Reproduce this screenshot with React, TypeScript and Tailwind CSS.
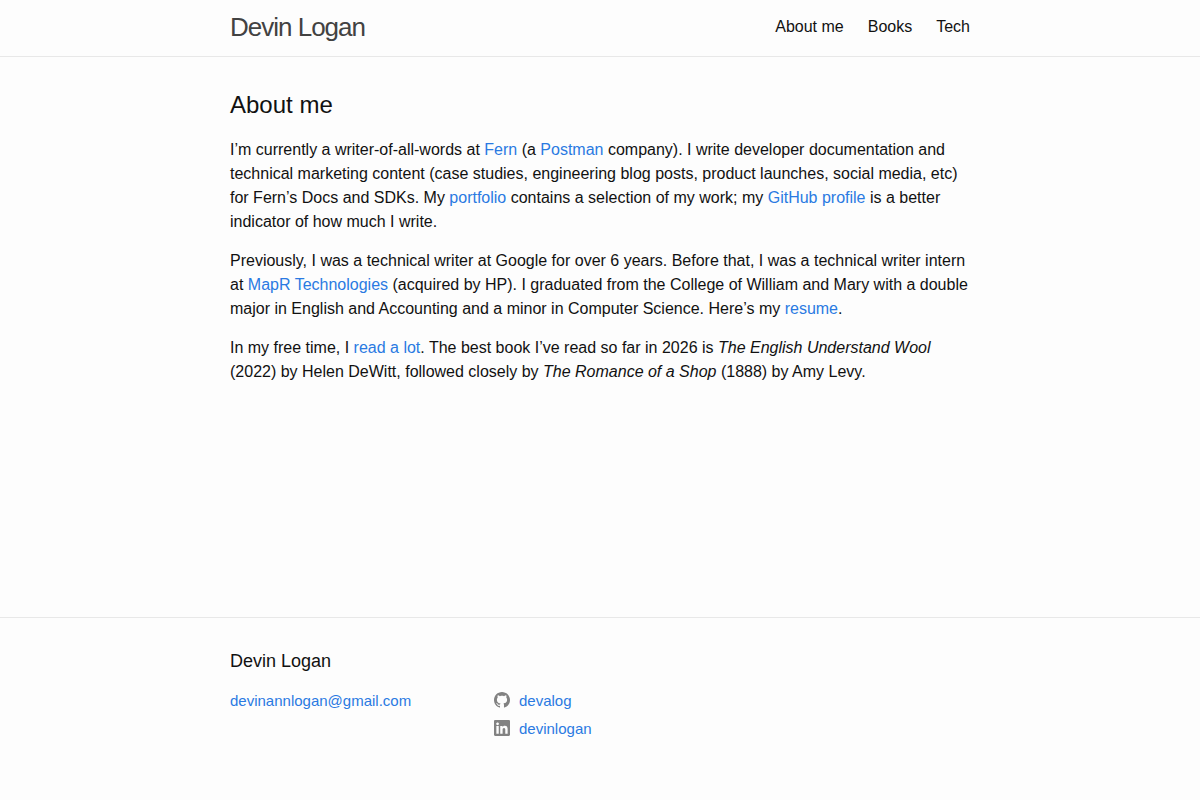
import type { ReactNode } from 'react';

const navigation = [
  { label: 'About me', href: '#about' },
  { label: 'Books', href: '#books' },
  { label: 'Tech', href: '#tech' },
];

function Wrapper({ children, className = '' }: { children: ReactNode; className?: string }) {
  return <div className={`mx-auto w-full max-w-[800px] px-[30px] ${className}`}>{children}</div>;
}

function TextLink({ href, children }: { href: string; children: ReactNode }) {
  return (
    <a href={href} className="text-[#2a7ae2] hover:text-[#111] hover:underline">
      {children}
    </a>
  );
}

function GitHubIcon() {
  return (
    <svg viewBox="0 0 16 16" className="mb-0.5 size-4 fill-[#828282]" aria-hidden="true">
      <path
        fillRule="evenodd"
        clipRule="evenodd"
        d="M8 0C3.58 0 0 3.582 0 8c0 3.535 2.292 6.533 5.47 7.59.4.075.547-.172.547-.385 0-.19-.007-.693-.01-1.36-2.226.483-2.695-1.073-2.695-1.073-.364-.924-.89-1.17-.89-1.17-.725-.496.056-.486.056-.486.803.056 1.225.824 1.225.824.714 1.223 1.873.87 2.33.665.072-.517.278-.87.507-1.07-1.777-.2-3.644-.888-3.644-3.953 0-.873.31-1.587.823-2.147-.083-.202-.358-1.015.077-2.117 0 0 .672-.215 2.2.82.638-.178 1.323-.266 2.003-.27.68.004 1.364.092 2.003.27 1.527-1.035 2.198-.82 2.198-.82.437 1.102.163 1.915.08 2.117.513.56.823 1.274.823 2.147 0 3.073-1.87 3.75-3.653 3.947.287.246.543.735.543 1.48 0 1.07-.01 1.933-.01 2.195 0 .215.144.463.55.385C13.71 14.53 16 11.534 16 8c0-4.418-3.582-8-8-8"
      />
    </svg>
  );
}

function LinkedInIcon() {
  return (
    <svg viewBox="0 0 16 16" className="mb-0.5 size-4 fill-[#828282]" aria-hidden="true">
      <path
        fillRule="evenodd"
        clipRule="evenodd"
        d="M13.632 13.635h-2.37V9.922c0-.886-.018-2.025-1.234-2.025-1.235 0-1.424.964-1.424 1.96v3.778h-2.37V6H8.51V7.04h.03c.318-.6 1.092-1.233 2.247-1.233 2.4 0 2.845 1.58 2.845 3.637v4.188zM3.558 5.23c-.762 0-1.376-.617-1.376-1.377 0-.758.614-1.375 1.376-1.375.76 0 1.376.617 1.376 1.375 0 .76-.617 1.377-1.376 1.377zm1.188 8.405H2.37V6h2.376v7.635zM14.816 0H1.18C.528 0 0 .516 0 1.153v13.694C0 15.484.528 16 1.18 16h13.635c.652 0 1.185-.516 1.185-1.153V1.153C16 .516 15.467 0 14.815 0z"
      />
    </svg>
  );
}

function SocialLink({ icon, name, href }: { icon: ReactNode; name: string; href: string }) {
  return (
    <li>
      <a
        href={href}
        className="flex items-center gap-[9px] text-[#2a7ae2] hover:underline"
      >
        {icon}
        <span>{name}</span>
      </a>
    </li>
  );
}

export default function App() {
  return (
    <div className="flex min-h-screen flex-col bg-[#fdfdfd] font-['Liberation_Sans',Arial,sans-serif] text-base leading-6 text-[#111]">
      <header className="border-b border-[#e8e8e8] pb-0.5">
        <Wrapper className="flex items-center justify-between leading-[54px]">
          <a href="#home" className="text-[26px] leading-[54px] tracking-[-1px] text-[#424242]">
            Devin Logan
          </a>
          <nav className="flex gap-6" aria-label="Main">
            {navigation.map((item) => (
              <a key={item.label} href={item.href} className="hover:underline">
                {item.label}
              </a>
            ))}
          </nav>
        </Wrapper>
      </header>

      <main className="flex-1 py-[30px]">
        <Wrapper>
          <h1 className="mb-[15px] text-2xl leading-9">About me</h1>
          <div className="space-y-[15px]">
            <p>
              I’m currently a writer-of-all-words at <TextLink href="#fern">Fern</TextLink> (a{' '}
              <TextLink href="#postman">Postman</TextLink> company). I write developer documentation and
              technical marketing content (case studies, engineering blog posts, product launches, social
              media, etc) for Fern’s Docs and SDKs. My <TextLink href="#portfolio">portfolio</TextLink>{' '}
              contains a selection of my work; my <TextLink href="#github">GitHub profile</TextLink> is a
              better indicator of how much I write.
            </p>
            <p>
              Previously, I was a technical writer at Google for over 6 years. Before that, I was a
              technical writer intern at <TextLink href="#mapr">MapR Technologies</TextLink> (acquired by
              HP). I graduated from the College of William and Mary with a double major in English and
              Accounting and a minor in Computer Science. Here’s my{' '}
              <TextLink href="#resume">resume</TextLink>.
            </p>
            <p>
              In my free time, I <TextLink href="#books">read a lot</TextLink>. The best book I’ve read so
              far in 2026 is <em>The English Understand Wool</em> (2022) by Helen DeWitt, followed closely
              by <em>The Romance of a Shop</em> (1888) by Amy Levy.
            </p>
          </div>
        </Wrapper>
      </main>

      <footer className="border-t border-[#e8e8e8] pt-[30px] pb-[60px]">
        <Wrapper>
          <h2 className="mb-[15px] text-lg leading-[27px]">Devin Logan</h2>
          <div className="flex flex-wrap text-[15px] leading-[22px]">
            <div className="w-[264px]">
              <TextLink href="mailto:devinannlogan@gmail.com">devinannlogan@gmail.com</TextLink>
            </div>
            <ul className="flex flex-col gap-1.5">
              <SocialLink icon={<GitHubIcon />} name="devalog" href="#github" />
              <SocialLink icon={<LinkedInIcon />} name="devinlogan" href="#linkedin" />
            </ul>
          </div>
        </Wrapper>
      </footer>
    </div>
  );
}
